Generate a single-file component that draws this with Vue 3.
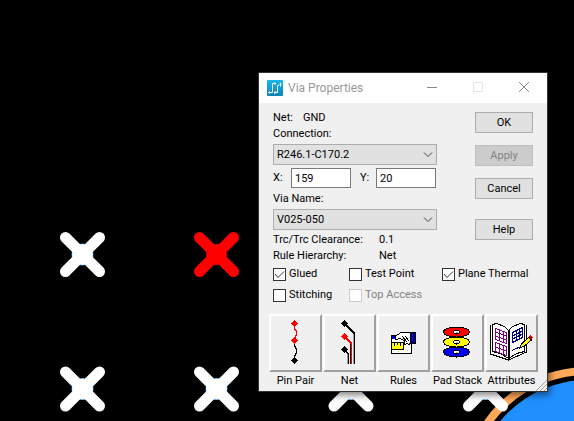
<script setup>
import { ref } from 'vue'

const vias = [
  { x: 82.5, y: 254.5, color: '#fff' },
  { x: 216.5, y: 254.5, color: '#f00' },
  { x: 82.5, y: 389, color: '#fff' },
  { x: 216.5, y: 389, color: '#fff' },
  { x: 351, y: 389, color: '#fff' },
  { x: 485.5, y: 389, color: '#fff' },
]

const connection = ref('R246.1-C170.2')
const viaName = ref('V025-050')
const x = ref('159')
const y = ref('20')

const options = ref([
  { id: 'glued', label: 'Glued', checked: true },
  { id: 'test', label: 'Test Point', checked: false },
  { id: 'thermal', label: 'Plane Thermal', checked: true },
  { id: 'stitching', label: 'Stitching', checked: false },
  { id: 'top', label: 'Top Access', checked: false, disabled: true },
])

const tools = [
  { id: 'pins', label: 'Pin Pair' },
  { id: 'net', label: 'Net' },
  { id: 'rules', label: 'Rules' },
  { id: 'pads', label: 'Pad Stack' },
  { id: 'attributes', label: 'Attributes' },
]

const pads = [
  { y: 16, color: '#f00' },
  { y: 26, color: '#ff0' },
  { y: 36, color: '#00f' },
]
</script>

<template>
  <main class="board">
    <svg class="canvas" aria-hidden="true">
      <circle cx="587" cy="492" r="121" fill="none" stroke="#ffa858" stroke-width="8" />
      <circle cx="587" cy="492" r="112" fill="#2090ff" />
      <g v-for="(via, i) in vias" :key="i" :transform="`translate(${via.x} ${via.y})`">
        <circle v-if="via.color === '#fff'" r="11" fill="#2090ff" />
        <circle r="10.5" :fill="via.color" />
        <path d="M-17-17L17 17M17-17L-17 17" :stroke="via.color" stroke-width="11" stroke-linecap="round" />
      </g>
    </svg>

    <section class="dialog" role="dialog" aria-labelledby="title">
      <header class="titlebar">
        <svg class="logo" width="16" height="16" viewBox="0 0 16 16" aria-hidden="true">
          <defs>
            <linearGradient id="logo-fill" x2="0" y2="1">
              <stop offset="0" stop-color="#18b8ee" />
              <stop offset="1" stop-color="#0d82b5" />
            </linearGradient>
          </defs>
          <rect width="16" height="16" rx="1" fill="url(#logo-fill)" />
          <path d="M2 12.500h3.500v-9H8M7 12.500h3.500v-7H12M13.500 3v3.500" fill="none" stroke="#fff" />
          <path d="M1 12.500l2-1.500v3zM7.500 2l2 1.500-2 1.500zM12 4.500L13.500 2.500l1.500 2zM7 11.500h2v2H7z" fill="#fff" />
        </svg>
        <h1 id="title">Via Properties</h1>
        <button class="control" aria-label="Minimize">
          <svg width="12" height="12" viewBox="0 0 12 12"><path d="M1 5.500h10" /></svg>
        </button>
        <button class="control faint" aria-label="Maximize" disabled>
          <svg width="12" height="12" viewBox="0 0 12 12"><path d="M1.500 .5h9v9h-9z" /></svg>
        </button>
        <button class="control" aria-label="Close">
          <svg width="12" height="12" viewBox="0 0 12 12"><path d="M1 0l10 10M11 0L1 10" /></svg>
        </button>
      </header>

      <div class="content">
        <div class="properties">
          <div class="fields">
            <p class="net"><span>Net:</span><span>GND</span></p>
            <label for="connection">Connection:</label>
            <div class="picker">
              <select id="connection" v-model="connection"><option>R246.1-C170.2</option></select>
              <svg width="10" height="6" viewBox="0 0 10 6" aria-hidden="true"><path d="M1 .5l4 4 4-4" /></svg>
            </div>
            <div class="position">
              <label for="x">X:</label><input id="x" v-model="x" type="text">
              <label for="y">Y:</label><input id="y" v-model="y" type="text">
            </div>
            <label for="via">Via Name:</label>
            <div class="picker">
              <select id="via" v-model="viaName"><option>V025-050</option></select>
              <svg width="10" height="6" viewBox="0 0 10 6" aria-hidden="true"><path d="M1 .5l4 4 4-4" /></svg>
            </div>
            <dl class="facts">
              <dt>Trc/Trc Clearance:</dt><dd>0.1</dd>
              <dt>Rule Hierarchy:</dt><dd>Net</dd>
            </dl>
          </div>
          <div class="actions">
            <button>OK</button>
            <button disabled>Apply</button>
            <button>Cancel</button>
            <button class="help">Help</button>
          </div>
        </div>

        <div class="options">
          <label v-for="option in options" :key="option.id" :class="{ off: option.disabled }">
            <span class="tick">
              <input v-model="option.checked" type="checkbox" :disabled="option.disabled">
              <svg width="13" height="13" viewBox="0 0 13 13" aria-hidden="true"><path d="M2 6l3 3.500L11 3.500" /></svg>
            </span>
            {{ option.label }}
          </label>
        </div>

        <div class="tools">
          <div v-for="tool in tools" :key="tool.id" class="tool">
            <button :aria-labelledby="`tool-${tool.id}`">
              <svg width="49" height="54" viewBox="0 0 49 54" fill="none" shape-rendering="crispEdges" aria-hidden="true">
                <template v-if="tool.id === 'pins'">
                  <path d="M23.500 8v5l2 2v4l-2 3v3" stroke="#f00" stroke-width="1.500" />
                  <path d="M23.500 26v4l2 3v4l-2 3v5" stroke="#000" stroke-width="1.500" />
                  <path d="M23.500 4l3.500 3.500-3.500 3.500-3.500-3.500zM23.500 21l3.500 3.500-3.500 3.500-3.500-3.500z" fill="#f00" />
                  <path d="M23.500 41l3.500 3.500-3.500 3.500-3.500-3.500z" fill="#000" />
                </template>
                <template v-else-if="tool.id === 'net'">
                  <path d="M28.500 18v30M22.500 38v10" stroke="#999" />
                  <path d="M20 8l9.500 9.500V48M20 34l3.500 4V48" stroke="#000" stroke-width="1.500" />
                  <path d="M25.500 28v20" stroke="#000" />
                  <path d="M20 21l6.500 6.500V48" stroke="#f00" stroke-width="1.500" />
                  <path d="M19.500 4l3.500 3.500-3.500 3.500-3.500-3.500zM19.500 30l3.500 3.500-3.500 3.500-3.500-3.500z" fill="#000" />
                  <path d="M19.500 17l3.500 3.500-3.500 3.500-3.500-3.500z" fill="#f00" />
                </template>
                <template v-else-if="tool.id === 'rules'">
                  <path d="M12 19h20v18H12z" fill="#fff" stroke="#000" />
                  <path d="M13 20h6v3h-6z" fill="#00f" />
                  <path d="M12.500 26.500h12v7h-12z" fill="#ff0" stroke="#000" />
                  <path d="M15.500 27v3M18.500 27v2M21.500 27v3" stroke="#000" />
                  <path d="M16 20.500l6-4h10v9l-2 3-2-1-2 1-1-4-4-2-4 1z" fill="#fff" stroke="#000" />
                  <path d="M23 20l5 6M26 20l4 5" stroke="#000" />
                  <path d="M31.500 16.500h5v11h-5z" fill="#000080" stroke="#000" />
                  <path d="M33 18h1v7h-1z" fill="#00f" />
                  <path d="M19 35h1v1h-1zM28 34h1v1h-1z" fill="#dd0" />
                </template>
                <template v-else-if="tool.id === 'pads'">
                  <g v-for="pad in pads" :key="pad.y">
                    <ellipse cx="23.500" :cy="pad.y" rx="13" ry="5" :fill="pad.color" stroke="#000" />
                    <ellipse cx="23.500" :cy="pad.y" rx="3" ry="2" fill="#fff" stroke="#000" />
                    <path :d="`M23 ${pad.y}h2`" stroke="#aaa" />
                  </g>
                </template>
                <template v-else>
                  <path d="M3.500 9v29l18 6 18-8V9" fill="#fff" stroke="#000" />
                  <path d="M5.500 8.500l4-1 8 3 4 4 4-4 8-3 4 1v27l-8 2-8 5-8-5-8-2z" fill="#fff" stroke="#000" />
                  <path d="M21.500 14v30" stroke="#000" stroke-width="2" />
                  <path d="M8.500 12.500l11 4v11l-11-4zM8.500 16l11 4M8.500 20l11 4M12.500 14v11M16.500 15v11M8.500 26.500l11 4v9l-11-4zM8.500 31l11 4M12.500 28v9M16.500 29v9" stroke="#800080" />
                  <path d="M25.500 16.500l10-5v10l-10 5zM25.500 20l10-5M25.500 23l10-5M29.500 15v9M32.500 13v10M25 34.500l9-4" stroke="#000080" />
                  <path d="M33 32l1.500-4 7-6.500 3 2.500-7 6z" fill="#ff0" stroke="#000" />
                  <path d="M41 21l2-2 3 2.500-2 2z" fill="#d00000" />
                </template>
              </svg>
            </button>
            <span :id="`tool-${tool.id}`">{{ tool.label }}</span>
          </div>
        </div>
      </div>
      <svg class="grip" width="12" height="12" viewBox="0 0 12 12" aria-hidden="true">
        <path d="M1 12L12 1M5 12l7-7M9 12l3-3" />
      </svg>
    </section>
  </main>
</template>

<style>
body {
  margin: 0;
  background: #000;
}
</style>

<style scoped>
.board {
  position: relative;
  min-height: 100vh;
  overflow: hidden;
  background: #000;
  font: 11px/16px Roboto, "Liberation Sans", sans-serif;
  color: #000;
}
.canvas {
  position: absolute;
  inset: 0;
  width: 100%;
  height: 100%;
}
.dialog {
  position: absolute;
  left: 258px;
  top: 72px;
  border: 1px solid #333;
  background: #f0f0f0;
  box-shadow: 2px 3px 7px rgba(0, 0, 0, 0.5);
}
h1, p, dl, dd {
  margin: 0;
}
button, input, select {
  box-sizing: border-box;
  margin: 0;
  font: inherit;
  color: inherit;
  border-radius: 0;
}
.titlebar {
  display: flex;
  align-items: center;
  height: 30px;
  padding-left: 8px;
  background: #fff;
}
h1 {
  flex: 1;
  margin-left: 5px;
  font: 12px/16px Roboto, sans-serif;
  color: #999;
}
.control {
  display: grid;
  place-items: center;
  width: 46px;
  height: 30px;
  padding: 0;
  border: 0;
  background: none;
}
.control svg {
  fill: none;
  stroke: #888;
}
.faint svg {
  stroke: #e4e4e4;
}
.content {
  padding: 7px 9px 2px 10px;
}
.properties {
  display: flex;
  justify-content: space-between;
  padding: 0 5px 0 4px;
}
.fields {
  display: flex;
  flex-direction: column;
  width: 164px;
}
.net {
  display: flex;
  gap: 10px;
}
.picker {
  display: grid;
  align-items: center;
  margin: 2px 0;
}
.picker > * {
  grid-area: 1 / 1;
}
.picker svg {
  justify-self: end;
  margin-right: 4px;
  fill: none;
  stroke: #444;
  pointer-events: none;
}
select {
  appearance: none;
  width: 100%;
  height: 21px;
  padding: 0 3px;
  border: 1px solid #adadad;
  background: #e1e1e1;
}
.position {
  display: grid;
  grid-template-columns: 18px 69px 16px 60px;
  align-items: center;
  margin: 1px 0 3px;
}
.position input {
  width: 60px;
  height: 20px;
  padding: 0 3px;
  border: 1px solid #7a7a7a;
  background: #fff;
}
.facts {
  display: grid;
  grid-template-columns: 106px 1fr;
}
.actions {
  display: flex;
  flex-direction: column;
  gap: 12px;
  width: 58px;
  padding-top: 2px;
}
.actions button {
  height: 21px;
  padding: 0;
  border: 1px solid #adadad;
  background: #e1e1e1;
}
.actions button:disabled {
  border-color: #bfbfbf;
  background: #ccc;
  color: #838383;
}
.actions .help {
  margin-top: 8px;
}
.options {
  display: grid;
  grid-template-columns: 76px 93px 1fr;
  row-gap: 5px;
  padding: 2px 0 0 4px;
}
.options label {
  display: flex;
  align-items: center;
  gap: 3px;
  white-space: nowrap;
}
.options .off {
  color: #838383;
}
.tick {
  display: grid;
}
.tick > * {
  grid-area: 1 / 1;
}
.tick input {
  appearance: none;
  width: 13px;
  height: 13px;
  border: 1px solid #333;
  background: #fff;
}
.tick input:disabled {
  border-color: #ccc;
}
.tick svg {
  visibility: hidden;
  fill: none;
  stroke: #333;
  pointer-events: none;
}
.tick input:checked + svg {
  visibility: visible;
}
.tools {
  display: flex;
  gap: 1px;
  padding-top: 11px;
}
.tool {
  display: flex;
  flex-direction: column;
  align-items: center;
  gap: 1px;
  width: 53px;
  white-space: nowrap;
}
.tool button {
  width: 53px;
  height: 58px;
  padding: 0;
  border: 2px solid;
  border-color: #fff #a0a0a0 #a0a0a0 #fff;
  background: #f0f0f0;
}
.tool button svg {
  display: block;
}
.grip {
  position: absolute;
  right: 0;
  bottom: 0;
  fill: none;
  stroke: #a0a0a0;
}
</style>
